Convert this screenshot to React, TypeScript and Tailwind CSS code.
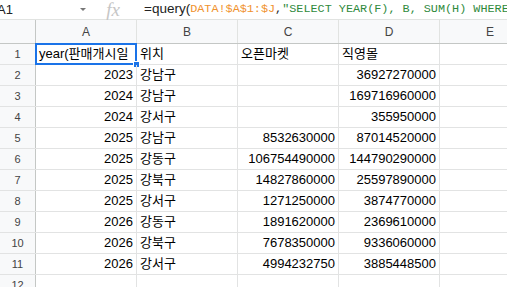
const rows: [string, string, string, string, string][] = [
  ['1', 'year(판매개시일', '위치', '오픈마켓', '직영몰'],
  ['2', '2023', '강남구', '', '36927270000'],
  ['3', '2024', '강남구', '', '169716960000'],
  ['4', '2024', '강서구', '', '355950000'],
  ['5', '2025', '강남구', '8532630000', '87014520000'],
  ['6', '2025', '강동구', '106754490000', '144790290000'],
  ['7', '2025', '강북구', '14827860000', '25597890000'],
  ['8', '2025', '강서구', '1271250000', '3874770000'],
  ['9', '2026', '강동구', '1891620000', '2369610000'],
  ['10', '2026', '강북구', '7678350000', '9336060000'],
  ['11', '2026', '강서구', '4994232750', '3885448500'],
  ['12', '', '', '', ''],
];

const cellFont = { fontFamily: '"Liberation Sans", "Noto Sans CJK KR", sans-serif' };
const mono = { fontFamily: '"Liberation Mono", monospace' };

function Cell({ text, num, selected }: { text: string; num?: boolean; selected?: boolean }) {
  return (
    <div className="relative h-full w-[101px] shrink-0 border-r border-[#e2e3e3]">
      <div
        className={`h-full overflow-hidden whitespace-nowrap flex items-center text-[13px] text-black ${
          num ? 'justify-end pr-[3px]' : 'pl-[3px]'
        }`}
      >
        {text}
      </div>
      {selected && (
        <>
          <div className="absolute left-[-1px] top-[-1px] right-[-1px] bottom-[-1px] border-2 border-[#1a73e8]" />
          <div className="absolute right-[-4px] bottom-[-4px] w-[7px] h-[7px] bg-[#1a73e8] border border-white" />
        </>
      )}
    </div>
  );
}

export default function App() {
  return (
    <div className="w-[507px] h-[287px] overflow-hidden bg-white" style={cellFont}>
      {/* formula bar */}
      <div className="h-[20px] flex items-center border-b border-[#e1e3e1]">
        <div className="w-[73px] shrink-0 h-full flex items-center text-[13px] text-[#222]">
          <span className="-ml-[3px]">A1</span>
        </div>
        <div className="w-px h-[18px] bg-[#e1e3e1]" />
        <div className="w-[19px] shrink-0 flex justify-center">
          <div className="w-0 h-0 border-l-[3px] border-r-[3px] border-t-[3px] border-l-transparent border-r-transparent border-t-[#777]" />
        </div>
        <div className="w-px h-[18px] bg-[#e1e3e1]" />
        <div className="w-[42px] shrink-0 flex justify-center text-[19px] italic text-[#c6c6c6] leading-none" style={{ fontFamily: '"Liberation Serif", serif' }}>
          fx
        </div>
        <div className="w-px h-[18px] bg-[#e1e3e1]" />
        <div className="pl-[10px] whitespace-nowrap flex items-center">
          <span className="text-[13.5px] text-[#222]">=query(</span>
          <span className="text-[11.8px] text-[#f0922e]" style={mono}>
            DATA!$A$1:$J
          </span>
          <span className="text-[11.8px] text-[#222]" style={mono}>
            ,
          </span>
          <span className="text-[11.8px] text-[#2f8a3c]" style={mono}>
            "SELECT YEAR(F), B, SUM(H) WHERE
          </span>
        </div>
      </div>

      {/* column headers */}
      <div className="h-[24px] flex bg-[#f8f9fa] border-b border-[#c4c7c5] text-[12px] text-[#444]">
        <div className="w-[36px] shrink-0 border-r border-[#c4c7c5]" />
        {['A', 'B', 'C', 'D', 'E'].map((c) => (
          <div key={c} className="w-[101px] shrink-0 border-r border-[#e1e3e1] flex items-center justify-center pt-px">
            {c}
          </div>
        ))}
      </div>

      {/* rows */}
      {rows.map((r, i) => (
        <div key={r[0]} className="h-[21px] flex border-b border-[#e2e3e3]">
          <div className="w-[36px] shrink-0 bg-[#f8f9fa] border-r border-[#c4c7c5] flex items-center justify-center text-[11px] text-[#444]">
            {r[0]}
          </div>
          <Cell text={r[1]} num={i > 0} selected={i === 0} />
          <Cell text={r[2]} />
          <Cell text={r[3]} num={i > 0} />
          <Cell text={r[4]} num={i > 0} />
          <Cell text="" />
        </div>
      ))}
    </div>
  );
}
